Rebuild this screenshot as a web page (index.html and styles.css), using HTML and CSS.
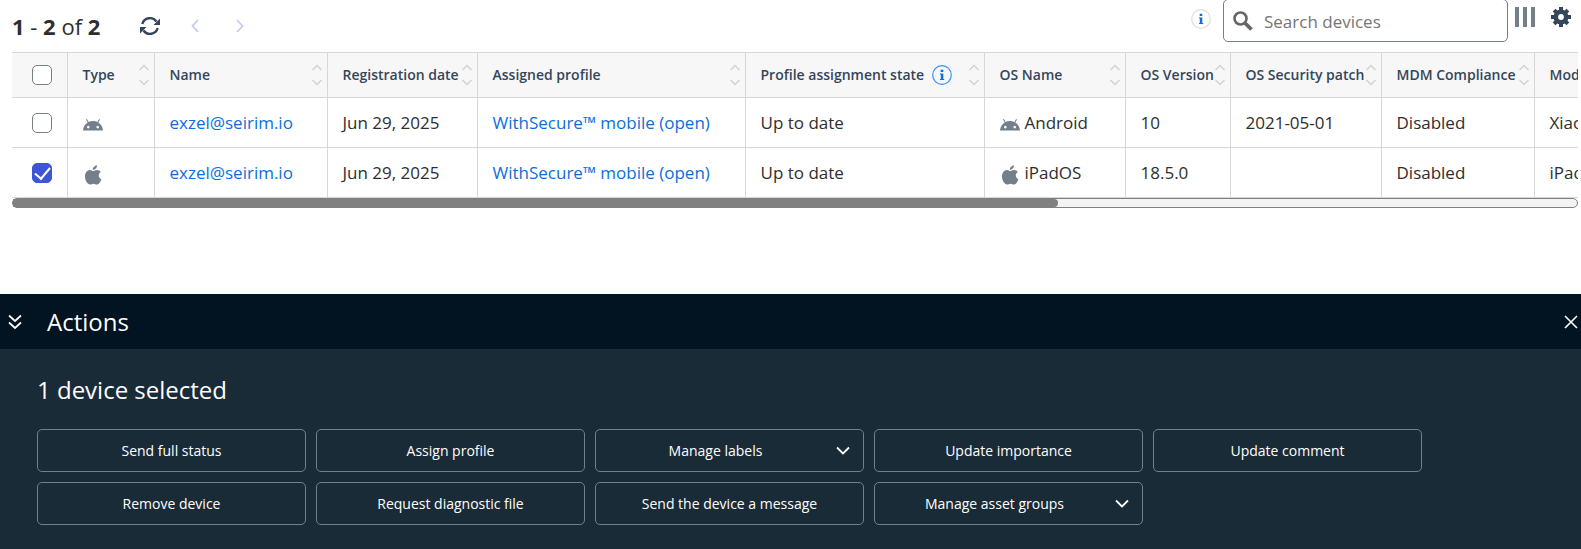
FILE: index.html
```html
<!DOCTYPE html>
<html lang="en">
<head>
<meta charset="utf-8">
<title>Devices</title>
<link rel="stylesheet" href="styles.css">
</head>
<body>
<svg class="defs" aria-hidden="true">
  <symbol id="sort" viewBox="0 0 10 22"><path d="M.5 6L5 1.500 9.500 6M.5 16L5 20.500 9.500 16" fill="none" stroke="currentColor" stroke-width="1.500"/></symbol>
  <symbol id="android" viewBox="0 0 20 20"><path fill="currentColor" fill-rule="evenodd" d="M3 4.600l.9-.5 1.700 2.900A9.500 9.500 0 0 1 10 6c1.600 0 3.100.3 4.400 1l1.700-2.900.9.500-1.700 2.900C18 9.200 19.700 12 20 15.500H0C.3 12 2 9.200 4.700 7.500zM5.300 10.800a1.300 1.300 0 1 0 .01 0zM14.700 10.800a1.300 1.300 0 1 0 .01 0z"/></symbol>
  <symbol id="apple" viewBox="0 0 20 20"><path fill="currentColor" d="M14 .2c.2 2.600-2 4.700-4.200 4.700C9.500 2.500 11.800.4 14 .2zM10.200 6.100c.9 0 2.100-1.200 4-1.200 1.500 0 2.900.8 3.600 2-3.100 1.800-2.600 6 .6 7.300-.8 2.300-2.500 5.300-4.300 5.300-1.300 0-1.900-.8-3.500-.8s-2.300.8-3.500.8C4.600 19.500 2 15.400 2 11.500 2 7.400 4.400 5 7 5c1.500 0 2.500 1.100 3.200 1.100z"/></symbol>
  <symbol id="info" viewBox="0 0 20 20"><circle cx="10" cy="10" r="9.300" fill="none" stroke-width="1.200"/><path fill="currentColor" stroke="none" d="M8.700 4.800h2.600V7H8.700zM8 8.400h3.300v5.500h.9v1.100H8v-1.100h.8V9.500H8z"/></symbol>
  <symbol id="down" viewBox="0 0 14 10"><path d="M1 1.500l6 6 6-6" fill="none" stroke="currentColor" stroke-width="1.800"/></symbol>
</svg>

<main>
  <div class="toolbar">
    <p class="count"><b>1</b> - <b>2</b> of <b>2</b></p>
    <button class="icon-btn refresh" aria-label="Refresh"><svg width="20" height="20" viewBox="0 0 20 20"><g fill="none" stroke="currentColor" stroke-width="2.400"><path d="M2.300 8A8 8 0 0 1 16.500 5.500"/><path d="M17.700 12A8 8 0 0 1 3.500 14.500"/></g><path fill="currentColor" d="M20 2.600V9h-6.500zM0 17.400V11h6.500z"/></svg></button>
    <button class="icon-btn page" aria-label="Previous page"><svg width="8" height="14" viewBox="0 0 8 14"><path d="M7 1L1.500 7 7 13" fill="none" stroke="currentColor" stroke-width="1.800"/></svg></button>
    <button class="icon-btn page" aria-label="Next page"><svg width="8" height="14" viewBox="0 0 8 14"><path d="M1 1l5.500 6L1 13" fill="none" stroke="currentColor" stroke-width="1.800"/></svg></button>
    <div class="tools">
      <svg class="info pale" width="20" height="20"><use href="#info"/></svg>
      <label class="search">
        <svg width="20" height="20" viewBox="0 0 20 20"><circle cx="7.500" cy="7.500" r="6" fill="none" stroke="currentColor" stroke-width="2.600"/><path d="M12 12l6.500 6.500" stroke="currentColor" stroke-width="3.800"/></svg>
        <input type="search" placeholder="Search devices" aria-label="Search devices">
      </label>
      <button class="icon-btn columns" aria-label="Columns"><svg width="20" height="20" viewBox="0 0 20 20"><path fill="currentColor" d="M0 0h4v20H0zM8 0h4v20H8zM16 0h4v20h-4z"/></svg></button>
      <button class="icon-btn gear" aria-label="Settings"><svg width="20" height="20" viewBox="0 0 20 20"><path fill="none" stroke="currentColor" stroke-width="4" d="M10 0v4.500M10 15.500V20M0 10h4.500M15.500 10H20M3.100 3.100l3 3M13.900 13.900l3 3M3.100 16.900l3-3M13.900 6.100l3-3"/><circle cx="10" cy="10" r="5.200" fill="none" stroke="currentColor" stroke-width="4.600"/></svg></button>
    </div>
  </div>

  <div class="table-wrap">
    <table>
      <colgroup><col class="c-check"><col class="c-type"><col class="c-name"><col class="c-date"><col class="c-profile"><col class="c-state"><col class="c-os"><col class="c-version"><col class="c-patch"><col class="c-mdm"><col class="c-model"></colgroup>
      <thead>
        <tr>
          <th><input type="checkbox" aria-label="Select all"></th>
          <th><div class="head">Type<svg class="sort"><use href="#sort"/></svg></div></th>
          <th><div class="head">Name<svg class="sort"><use href="#sort"/></svg></div></th>
          <th><div class="head">Registration date<svg class="sort"><use href="#sort"/></svg></div></th>
          <th><div class="head">Assigned profile<svg class="sort"><use href="#sort"/></svg></div></th>
          <th><div class="head">Profile assignment state<svg class="info" width="20" height="20"><use href="#info"/></svg><svg class="sort"><use href="#sort"/></svg></div></th>
          <th><div class="head">OS Name<svg class="sort"><use href="#sort"/></svg></div></th>
          <th><div class="head">OS Version<svg class="sort"><use href="#sort"/></svg></div></th>
          <th><div class="head">OS Security patch<svg class="sort"><use href="#sort"/></svg></div></th>
          <th><div class="head">MDM Compliance<svg class="sort"><use href="#sort"/></svg></div></th>
          <th><div class="head">Model</div></th>
        </tr>
      </thead>
      <tbody>
        <tr>
          <td><input type="checkbox" aria-label="Select Android device"></td>
          <td><svg class="os"><use href="#android"/></svg></td>
          <td><a href="#">exzel@seirim.io</a></td>
          <td>Jun 29, 2025</td>
          <td><a href="#">WithSecure™ mobile (open)</a></td>
          <td>Up to date</td>
          <td><span class="os-name"><svg class="os"><use href="#android"/></svg>Android</span></td>
          <td>10</td>
          <td>2021-05-01</td>
          <td>Disabled</td>
          <td>Xiaomi</td>
        </tr>
        <tr>
          <td><input type="checkbox" aria-label="Select iPadOS device" checked></td>
          <td><svg class="os"><use href="#apple"/></svg></td>
          <td><a href="#">exzel@seirim.io</a></td>
          <td>Jun 29, 2025</td>
          <td><a href="#">WithSecure™ mobile (open)</a></td>
          <td>Up to date</td>
          <td><span class="os-name"><svg class="os"><use href="#apple"/></svg>iPadOS</span></td>
          <td>18.5.0</td>
          <td></td>
          <td>Disabled</td>
          <td>iPad</td>
        </tr>
      </tbody>
    </table>
  </div>
  <div class="scroll-track"><div class="scroll-thumb"></div></div>
</main>

<section class="actions">
  <header>
    <button class="icon-btn" aria-label="Collapse"><svg width="14" height="16" viewBox="0 0 14 16"><path d="M1 1.500l6 5.500 6-5.500M1 8.500l6 5.500 6-5.500" fill="none" stroke="currentColor" stroke-width="1.700"/></svg></button>
    <h2>Actions</h2>
    <button class="icon-btn close" aria-label="Close"><svg width="14" height="14" viewBox="0 0 14 14"><path d="M1 1l12 12M13 1L1 13" stroke="currentColor" stroke-width="1.600"/></svg></button>
  </header>
  <div class="panel">
    <h3>1 device selected</h3>
    <div class="grid">
      <button>Send full status</button>
      <button>Assign profile</button>
      <button class="menu"><span>Manage labels</span><svg width="14" height="10"><use href="#down"/></svg></button>
      <button>Update importance</button>
      <button>Update comment</button>
      <button>Remove device</button>
      <button>Request diagnostic file</button>
      <button>Send the device a message</button>
      <button class="menu"><span>Manage asset groups</span><svg width="14" height="10"><use href="#down"/></svg></button>
    </div>
  </div>
</section>
</body>
</html>
```
FILE: styles.css
```css
* { box-sizing: border-box; }
body {
  margin: 0;
  min-height: 100vh;
  display: flex;
  flex-direction: column;
  overflow: hidden;
  background: #fff;
  color: #2e2e2e;
  font: 17px/24px "Open Sans", "Noto Sans", sans-serif;
}
.defs { display: none; }
svg { display: block; flex: none; }
h2, h3, p { margin: 0; font-weight: 400; }
button { font: inherit; color: inherit; cursor: pointer; }
.icon-btn { display: block; padding: 0; border: 0; background: none; }

main { padding: 0 3px 0 12px; }
.toolbar { display: flex; align-items: center; height: 52px; color: #34465a; }
.count { width: 128px; color: #2e2e2e; font-size: 22px; line-height: 28px; }
.refresh { margin-right: 31px; }
.page { margin-right: 37px; color: #c0ccf4; }
.tools { display: flex; align-items: flex-start; align-self: flex-start; margin-left: auto; }
.info { color: #0a6fe0; stroke: #3393ff; }
.info.pale { margin-top: 9px; stroke: #dcdcdc; }
.search {
  display: flex;
  align-items: center;
  width: 285px;
  height: 43px;
  margin: -1px 7px 0 12px;
  padding: 0 9px;
  gap: 11px;
  border: 1px solid #747f8c;
  border-radius: 5px;
  color: #666;
}
.search input {
  width: 100%;
  min-width: 0;
  padding: 2px 0 0;
  border: 0;
  outline: 0;
  background: none;
  font: inherit;
}
.search input::placeholder { color: #757575; opacity: 1; }
.columns { margin: 7px 16px 0 0; color: #747f8c; }
.gear { margin: 7px 7px 0 0; }

.table-wrap { overflow: hidden; }
table { width: 2345px; table-layout: fixed; border-collapse: collapse; }
.c-check { width: 55px; }
.c-type { width: 87px; }
.c-name { width: 173px; }
.c-date { width: 150px; }
.c-profile { width: 268px; }
.c-state { width: 239px; }
.c-os { width: 141px; }
.c-version { width: 105px; }
.c-patch { width: 151px; }
.c-mdm { width: 153px; }
th, td {
  padding: 0 5px 0 15px;
  border: solid #d6d7da;
  border-width: 1px 1px 1px 0;
  text-align: left;
  white-space: nowrap;
}
th { height: 45px; background: #f7f7f7; color: #34465a; font-size: 14px; font-weight: 600; }
td { height: 50px; }
th:first-child, td:first-child { padding: 0 0 0 20px; }
.head { display: flex; align-items: center; }
.head .info { margin-left: 8px; }
.sort { width: 10px; height: 22px; margin-left: auto; color: #cfd2d6; }
a { color: #0a6fdc; text-decoration: none; }
.os { width: 20px; height: 20px; margin-top: 4px; color: #747f8c; }
.os-name { display: flex; align-items: center; gap: 5px; }
input[type="checkbox"] {
  appearance: none;
  display: block;
  width: 20px;
  height: 20px;
  margin: 0;
  border: 1px solid #747f8c;
  border-radius: 5px;
  background: #fff;
}
input[type="checkbox"]:checked { display: grid; place-items: center; border-color: #3c55d9; background: #3c55d9; }
input[type="checkbox"]:checked::after {
  content: "";
  width: 13px;
  height: 7px;
  margin-bottom: 3px;
  border: solid #fff;
  border-width: 0 0 2px 2px;
  rotate: -50deg;
}
.scroll-track { height: 10px; border: 1px solid #808080; border-radius: 5px; background: #f3f3f3; }
.scroll-thumb { width: 66.8%; height: 100%; border-radius: 0 4px 4px 0; background: #808080; }

.actions { flex: 1; display: flex; flex-direction: column; margin-top: 86px; color: #fff; }
.actions header {
  display: flex;
  align-items: center;
  height: 55px;
  padding: 0 3px 0 8px;
  background: #021321;
}
.actions h2 { margin-left: 25px; font-size: 24px; line-height: 32px; }
.close { margin-left: auto; }
.panel { flex: 1; padding: 25px 37px 24px; border-bottom: 1px solid #10202e; background: #1a2b38; }
h3 { margin-bottom: 23px; font-size: 24px; line-height: 32px; }
.grid { display: grid; grid-template-columns: repeat(auto-fill, 269px); gap: 10px; font-size: 14px; }
.grid button {
  height: 43px;
  padding: 0 13px;
  border: 1px solid #747f8c;
  border-radius: 5px;
  background: none;
}
.menu { display: flex; align-items: center; gap: 14px; }
.menu span { flex: 1; }
```
